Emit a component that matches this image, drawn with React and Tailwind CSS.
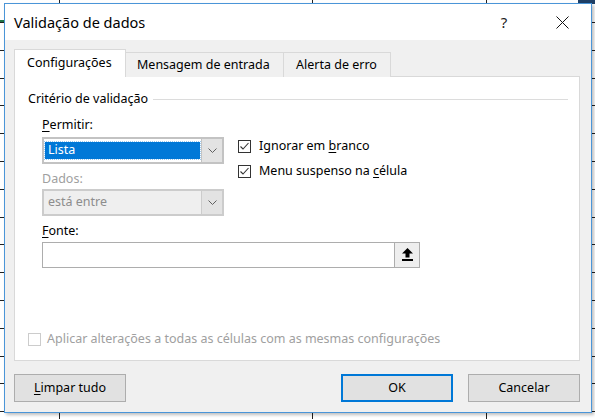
import React from "react";

const FONT = { fontFamily: '"Noto Sans", "Open Sans", sans-serif' };

const ROW_LINES = [22, 50, 78, 105, 133, 161, 189, 217, 244, 272, 300, 328, 356, 383, 411];
const COL_LINES = [59, 312, 486];

function Chevron() {
  return (
    <svg width="9" height="5" viewBox="0 0 9 5">
      <path d="M0.5 0.5 L4.5 4.5 L8.5 0.5" fill="none" stroke="#606060" strokeWidth="1" />
    </svg>
  );
}

function Check({ checked = true, disabled = false }) {
  return (
    <div className={`w-[13px] h-[13px] border flex items-center justify-center ${disabled ? "border-[#cccccc] bg-white" : "border-[#333333] bg-white"}`}>
      {checked && (
        <svg width="11" height="11" viewBox="0 0 11 11">
          <path d="M1.5 5.5 L4 8 L9.5 2" fill="none" stroke="#333333" strokeWidth="1.1" />
        </svg>
      )}
    </div>
  );
}

export default function App() {
  return (
    <div className="relative w-[595px] h-[419px] overflow-hidden bg-white text-[12.5px] text-black" style={FONT}>
      {/* spreadsheet behind the dialog */}
      {ROW_LINES.map((y) => (
        <div key={y} className="absolute left-0 w-full h-px bg-[#202020]" style={{ top: y }} />
      ))}
      {COL_LINES.map((x) => (
        <div key={x} className="absolute top-0 h-full w-px bg-[#202020]" style={{ left: x }} />
      ))}
      <div className="absolute left-[578px] top-0 w-[17px] h-[4px] bg-[#1e3f66]" />
      <div className="absolute left-0 top-[20px] w-[4px] h-[2px] bg-[#217346]" />

      <div className="relative pl-[4px] pt-[3px]">
        <div className="w-[588px] h-[410px] border border-[#4a95d8] bg-[#f0f0f0] flex flex-col shadow-[2px_2px_3px_rgba(0,0,0,0.25)]">
          {/* title bar */}
          <div className="h-[36px] bg-white flex items-center justify-between pl-[9px]">
            <span className="text-[14.5px] leading-none">Validação de dados</span>
            <div className="flex items-center h-full">
              <span className="text-[15px] w-[58px] text-center leading-none text-[#222]">?</span>
              <div className="w-[58px] flex justify-center">
                <svg width="13" height="13" viewBox="0 0 13 13">
                  <path d="M0.5 0.5 L12.5 12.5 M12.5 0.5 L0.5 12.5" stroke="#111" strokeWidth="1" />
                </svg>
              </div>
            </div>
          </div>

          {/* body */}
          <div className="flex-1 pl-[9px] pr-[11px] pt-[9px] flex flex-col">
            {/* tabs */}
            <div className="flex items-end h-[28px] relative z-10">
              <div className="h-[28px] w-[112px] bg-white border border-b-0 border-[#d9d9d9] flex items-center pl-[12px] leading-none">
                Configurações
              </div>
              <div className="h-[25px] w-[158px] border border-l-0 border-b-0 border-[#d9d9d9] bg-[#f0f0f0] flex items-center pl-[11px] leading-none">
                Mensagem de entrada
              </div>
              <div className="h-[25px] w-[107px] border border-l-0 border-b-0 border-[#d9d9d9] bg-[#f0f0f0] flex items-center pl-[12px] leading-none">
                Alerta de erro
              </div>
            </div>

            {/* panel */}
            <div className="h-[285px] -mt-px bg-white border border-[#d9d9d9] flex flex-col pl-[13px] pr-[11px]">
              <div className="flex items-center gap-[5px] mt-[14px] h-[16px]">
                <span className="leading-none">Critério de validação</span>
                <div className="flex-1 h-px bg-[#dcdcdc]" />
              </div>

              <div className="flex pl-[14px] mt-[10px]">
                <div className="w-[182px] flex flex-col">
                  <span className="leading-none mt-[2px]">
                    <u className="underline-offset-2">P</u>ermitir:
                  </span>
                  <div className="mt-[5px] h-[27px] border-2 border-[#c3c3c3] flex bg-white">
                    <div className="flex-1 pl-[1px] pt-[3px] pb-[3px] pr-[1px]">
                      <div className="h-full bg-[#0078d7] outline outline-1 outline-dotted outline-[#9ccaf0] text-white flex items-center pl-[3px] leading-none">
                        Lista
                      </div>
                    </div>
                    <div className="w-[21px] bg-[#e3e3e3] border-l border-[#c3c3c3] flex items-center justify-center">
                      <Chevron />
                    </div>
                  </div>
                  <span className="leading-none mt-[9px] text-[#a0a0a0]">Dados:</span>
                  <div className="mt-[4px] h-[27px] border-2 border-[#cccccc] flex bg-[#efefef]">
                    <div className="flex-1 flex items-center pl-[4px] text-[#8d8d8d] leading-none">está entre</div>
                    <div className="w-[21px] bg-[#e3e3e3] border-l border-[#cccccc] flex items-center justify-center">
                      <Chevron />
                    </div>
                  </div>
                </div>

                <div className="ml-[14px] mt-[22px] flex flex-col gap-[11px]">
                  <div className="flex items-center gap-[8px] h-[14px]">
                    <Check />
                    <span className="leading-none">
                      Ignorar em <u className="underline-offset-2">b</u>ranco
                    </span>
                  </div>
                  <div className="flex items-center gap-[8px] h-[14px]">
                    <Check />
                    <span className="leading-none">
                      Menu suspenso na <u className="underline-offset-2">c</u>élula
                    </span>
                  </div>
                </div>
              </div>

              <div className="pl-[14px] flex flex-col">
                <span className="leading-none mt-[9px]">
                  <u className="underline-offset-2">F</u>onte:
                </span>
                <div className="mt-[4px] w-[378px] h-[26px] border border-[#adadad] flex bg-white">
                  <div className="flex-1" />
                  <div className="w-[26px] -my-px -mr-px border border-[#adadad] bg-[#eeeeee] flex items-center justify-center">
                    <svg width="11" height="13" viewBox="0 0 11 13">
                      <polygon points="5.5,0 11,5.5 7.5,5.5 7.5,9.5 3.5,9.5 3.5,5.5 0,5.5" fill="#000" />
                      <rect x="0" y="11" width="11" height="2" fill="#000" />
                    </svg>
                  </div>
                </div>
              </div>

              <div className="mt-auto mb-[14px] flex items-center gap-[6px]">
                <Check checked={false} disabled />
                <span className="leading-none text-[#a0a0a0]">
                  Aplicar alterações a todas as células com as mesmas configurações
                </span>
              </div>
            </div>

            {/* buttons */}
            <div className="flex mt-[13px]">
              <button className="w-[112px] h-[28px] bg-[#e1e1e1] border border-[#adadad] flex items-center justify-center leading-none">
                <span>
                  <u className="underline-offset-2">L</u>impar tudo
                </span>
              </button>
              <div className="flex-1" />
              <button className="w-[112px] h-[28px] bg-[#e1e1e1] border-2 border-[#0078d7] flex items-center justify-center leading-none">
                OK
              </button>
              <button className="ml-[15px] w-[112px] h-[28px] bg-[#e1e1e1] border border-[#adadad] flex items-center justify-center leading-none">
                Cancelar
              </button>
            </div>
          </div>
        </div>
      </div>
    </div>
  );
}
